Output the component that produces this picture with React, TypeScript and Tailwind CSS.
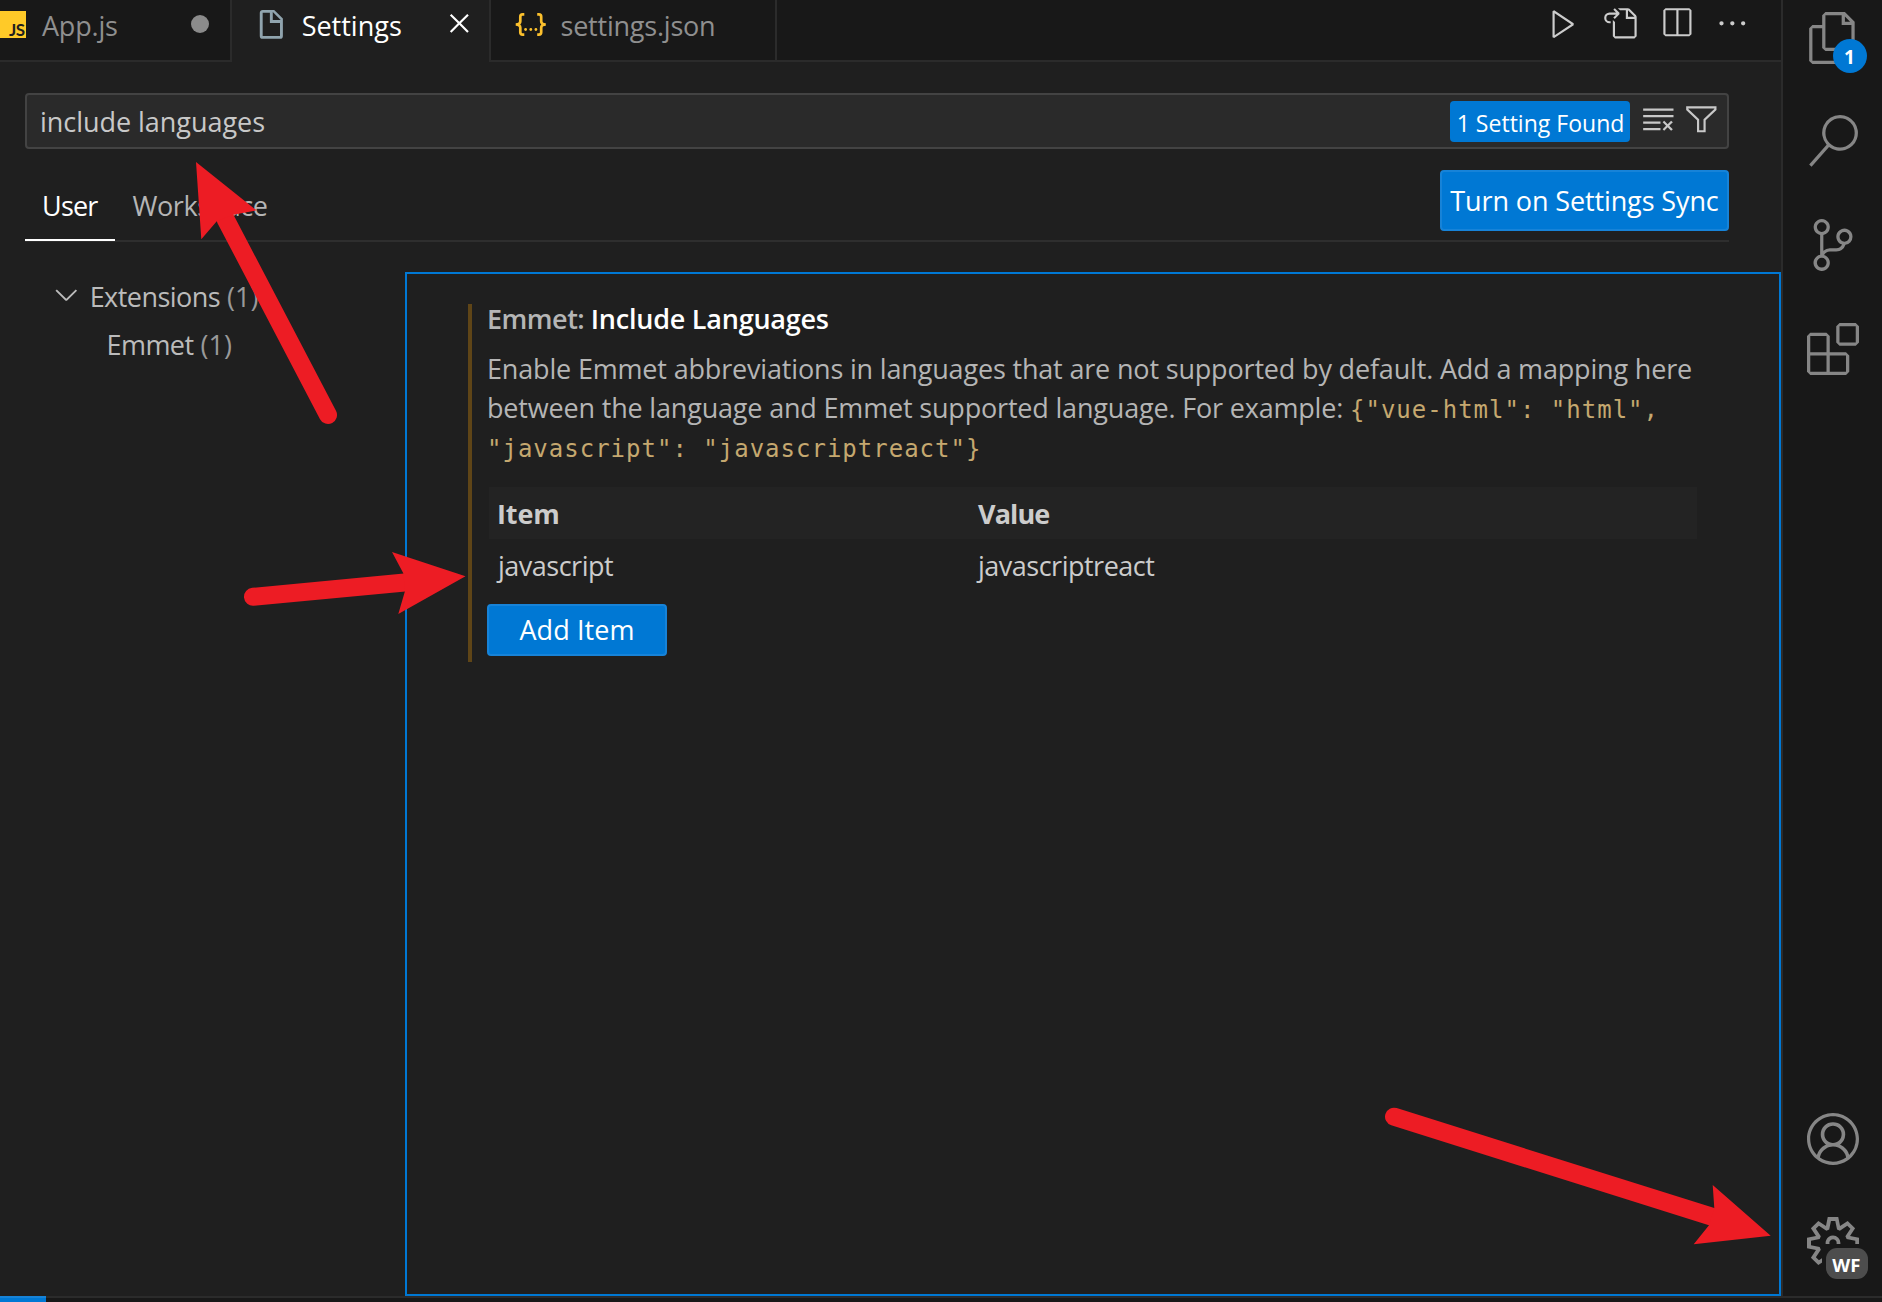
import type { ReactNode } from "react";
import {
  VscAccount,
  VscChevronDown,
  VscClearAll,
  VscClose,
  VscEllipsis,
  VscExtensions,
  VscFiles,
  VscFilter,
  VscGoToFile,
  VscPlay,
  VscSearch,
  VscSettingsGear,
  VscSourceControl,
  VscSplitHorizontal,
} from "react-icons/vsc";

const ICON = 34.67;
const ACTIVITY_ICON = 52;

function JsIcon() {
  return (
    <div className="relative mt-[11px] h-[27px] w-[26px] shrink-0 bg-[#ffca28]">
      <span className="absolute right-[1.5px] bottom-[-1px] font-['Lato'] text-[17px] leading-[19px] font-bold tracking-[-0.6px] text-[#1f1f1f]">
        JS
      </span>
    </div>
  );
}

function FileIcon() {
  return (
    <svg width={ICON} height={ICON} viewBox="0 0 24 24" fill="#90a4ae" className="mt-[7px] shrink-0">
      <path d="M13 9h5.5L13 3.5V9M6 2h8l6 6v12a2 2 0 0 1-2 2H6a2 2 0 0 1-2-2V4c0-1.11.89-2 2-2m5 2H6v16h12v-9h-7V4z" />
    </svg>
  );
}

function JsonIcon() {
  return (
    <svg width="32" height="24" viewBox="0 0 32 24" className="mt-[13px] shrink-0">
      <g fill="none" stroke="#fbc02d" strokeWidth="2.7">
        <path d="M9.3 1.4H7.6a2.3 2.3 0 0 0-2.3 2.3v4.5c0 2-1.6 3.3-4.6 3.3 3 0 4.6 1.3 4.6 3.3v4.5a2.3 2.3 0 0 0 2.3 2.3h1.7" />
        <path d="M22.2 1.4h1.7a2.3 2.3 0 0 1 2.3 2.3v4.5c0 2 1.6 3.3 4.6 3.3-3 0-4.6 1.3-4.6 3.3v4.5a2.3 2.3 0 0 1-2.3 2.3h-1.7" />
      </g>
      <g fill="#fbc02d">
        <circle cx="10.6" cy="16.5" r="1.4" />
        <circle cx="15.8" cy="16.5" r="1.4" />
        <circle cx="20.9" cy="16.5" r="1.4" />
      </g>
    </svg>
  );
}

function TabBar() {
  return (
    <div className="flex h-[62px] shrink-0 leading-[52px]">
      <div className="flex w-[232px] border-r-2 border-b-2 border-[#2b2b2b] text-[#8f8f8f]">
        <JsIcon />
        <span className="ml-[16px] tracking-[-0.2px]">App.js</span>
        <span className="mt-[14.5px] mr-[21px] ml-auto size-[18px] rounded-full bg-[#8b8b8b]" />
      </div>
      <div className="flex w-[259px] border-r-2 border-[#2b2b2b] bg-[#1f1f1f] text-white">
        <div className="w-[22px] shrink-0" />
        <FileIcon />
        <span className="ml-[13px]">Settings</span>
        <VscClose size={ICON} className="mt-[6px] mr-[12.5px] ml-auto" />
      </div>
      <div className="flex w-[286px] border-r-2 border-b-2 border-[#2b2b2b] pl-[23.5px] text-[#8f8f8f]">
        <JsonIcon />
        <span className="ml-[14px] tracking-[-0.22px]">settings.json</span>
      </div>
      <div className="flex flex-1 justify-end gap-[21.67px] border-b-2 border-[#2b2b2b] pr-[31.4px] pt-[6px] text-[#cccccc]">
        <VscPlay size={ICON} />
        <VscGoToFile size={ICON} />
        <VscSplitHorizontal size={ICON} />
        <VscEllipsis size={ICON} />
      </div>
    </div>
  );
}

function SettingsHeader() {
  return (
    <div className="flex shrink-0 flex-col pt-[31px] pr-[52px] pl-[25px]">
      <div className="flex h-[56px] items-center rounded-[4px] border-2 border-[#434343] bg-[#2a2a2a] pl-[13px] text-[#c8c8c8]">
        <span className="pt-[2px] tracking-[-0.04px]">include languages</span>
        <span className="ml-auto h-[41px] w-[180px] rounded-[4px] bg-[#0078d4] pl-[7px] text-[23px] leading-[45px] tracking-[0.02px] text-white">
          1 Setting Found
        </span>
        <VscClearAll size={ICON} className="mr-[8.5px] ml-[11.5px] -translate-y-[2px]" />
        <VscFilter size={ICON} className="mr-[8px] -translate-y-[2px]" />
      </div>
      <div className="mt-[21px] flex h-[72px] border-b-2 border-[#2e2e2e]">
        <div className="h-[71px] w-[90px] border-b-2 border-white pl-[17px] leading-[71px] tracking-[-0.8px] text-white">
          User
        </div>
        <div className="pl-[17.5px] leading-[71px] tracking-[-0.42px] text-[#b5b5b5]">Workspace</div>
        <button className="ml-auto h-[61px] w-[289px] rounded-[4px] border-2 border-[#1783d8] bg-[#0078d4] leading-[57px] tracking-[-0.12px] whitespace-nowrap text-white">
          Turn on Settings Sync
        </button>
      </div>
    </div>
  );
}

function Tree() {
  return (
    <div className="w-[405px] shrink-0 leading-[50px] text-[#bbbbbb]">
      <div className="flex h-[48px] pl-[49px]">
        <VscChevronDown size={ICON} className="mt-[5px]" />
        <span className="ml-[6px] tracking-[-0.55px]">Extensions</span>
        <span className="ml-[7px] text-[#999999]">(1)</span>
      </div>
      <div className="flex h-[48px] pl-[106.5px]">
        <span className="tracking-[-0.55px]">Emmet</span>
        <span className="ml-[7px] text-[#999999]">(1)</span>
      </div>
    </div>
  );
}

function Code({ children }: { children: ReactNode }) {
  return (
    <code className="font-['DejaVu_Sans_Mono',monospace] text-[24px] tracking-[1px] text-[#c5a86f]">{children}</code>
  );
}

function SettingPanel() {
  return (
    <div className="flex-1 border-2 border-[#0078d4] pt-[30px] pl-[61px]">
      <div className="h-[358px] border-l-[4.5px] border-[#5f4517] pl-[15px]">
        <div className="leading-[29px] font-semibold">
          <span className="tracking-[-0.5px] text-[#b5b5b5]">Emmet: </span>
          <span className="tracking-[-0.22px] text-white">Include Languages</span>
        </div>
        <div className="mt-[16px] leading-[39px] whitespace-nowrap text-[#b5b5b5]">
          <div className="h-[39px] tracking-[-0.17px]">
            Enable Emmet abbreviations in languages that are not supported by default. Add a mapping here
          </div>
          <div className="h-[39px] tracking-[-0.18px]">
            between the language and Emmet supported language. For example:{" "}
            <Code>{'{"vue-html": "html",'}</Code>
          </div>
          <div className="h-[39px]">
            <Code>{'"javascript": "javascriptreact"}'}</Code>
          </div>
        </div>
        <div className="mt-[21px] ml-[2px] w-[1208px] leading-[54px] text-[#cccccc]">
          <div className="flex h-[52px] bg-[#232323] font-bold">
            <div className="w-[482px] pl-[8px] tracking-[-0.1px]">Item</div>
            <div className="pl-[7px] tracking-[-0.9px]">Value</div>
          </div>
          <div className="flex h-[52px]">
            <div className="w-[482px] pl-[9px] tracking-[-0.5px]">javascript</div>
            <div className="pl-[7px] tracking-[-0.5px]">javascriptreact</div>
          </div>
        </div>
        <button className="mt-[13px] block h-[52px] w-[180px] rounded-[4px] border-2 border-[#1783d8] bg-[#0078d4] leading-[48px] tracking-[0.1px] text-white">
          Add Item
        </button>
      </div>
    </div>
  );
}

function ActivityBar() {
  return (
    <div className="flex w-[101px] shrink-0 flex-col items-center border-l-2 border-[#2b2b2b] pt-[12px] pb-[27px] text-[#868686]">
      <div className="relative mb-[51px]">
        <VscFiles size={ACTIVITY_ICON} />
        <span className="absolute top-[27px] left-[26px] size-[34px] rounded-full bg-[#0078d4] text-center text-[19px] leading-[36px] font-bold text-white">
          1
        </span>
      </div>
      <VscSearch size={ACTIVITY_ICON} className="mb-[52px]" />
      <VscSourceControl size={ACTIVITY_ICON} className="mb-[52px]" />
      <VscExtensions size={ACTIVITY_ICON} />
      <VscAccount size={ACTIVITY_ICON} className="mt-auto mb-[52px]" />
      <div className="relative">
        <VscSettingsGear size={ACTIVITY_ICON} />
        <span className="absolute top-[27px] left-[15px] bg-[#181818] p-[4px]">
          <span className="block h-[31px] w-[42px] rounded-[11px] bg-[#4d4d4d] text-center text-[18.5px] leading-[33px] font-bold tracking-[0.3px] text-white">
            WF
          </span>
        </span>
      </div>
    </div>
  );
}

/* Hand-drawn pointers laid over the window. */
function Arrows() {
  return (
    <svg
      className="pointer-events-none absolute inset-0"
      width="1882"
      height="1302"
      viewBox="0 0 1882 1302"
      fill="#ed1c24"
      stroke="#ed1c24"
    >
      <g strokeWidth="18" strokeLinecap="round">
        <path d="M328 415L225.5 219" />
        <path d="M253 596.8L410 582" />
        <path d="M1394 1116.7L1714 1217.3" />
      </g>
      <g stroke="none">
        <path d="M196 162L256.5 210.3L233.3 214.7L217 221L201.3 239.3Z" />
        <path d="M465.5 576.3L392 552L403.3 573.3L405 591L398.3 614Z" />
        <path d="M1770.7 1235.7L1712.7 1185L1714.3 1208.3L1709 1225.3L1693.7 1244.3Z" />
      </g>
    </svg>
  );
}

export default function App() {
  return (
    <div className="relative flex h-[1302px] w-[1882px] flex-col overflow-hidden bg-[#181818] font-['Open_Sans','Noto_Sans',sans-serif] text-[27px] whitespace-nowrap">
      <div className="flex h-[1296px] shrink-0">
        <div className="flex w-[1781px] shrink-0 flex-col">
          <TabBar />
          <div className="flex flex-1 flex-col bg-[#1f1f1f]">
            <SettingsHeader />
            <div className="flex flex-1 pt-[30px]">
              <Tree />
              <SettingPanel />
            </div>
          </div>
        </div>
        <ActivityBar />
      </div>
      <div className="flex h-[6px] border-t-2 border-[#2b2b2b]">
        <div className="-mt-[2px] w-[46px] border-t-2 border-[#1783d8] bg-[#0078d4]" />
      </div>
      <Arrows />
    </div>
  );
}
